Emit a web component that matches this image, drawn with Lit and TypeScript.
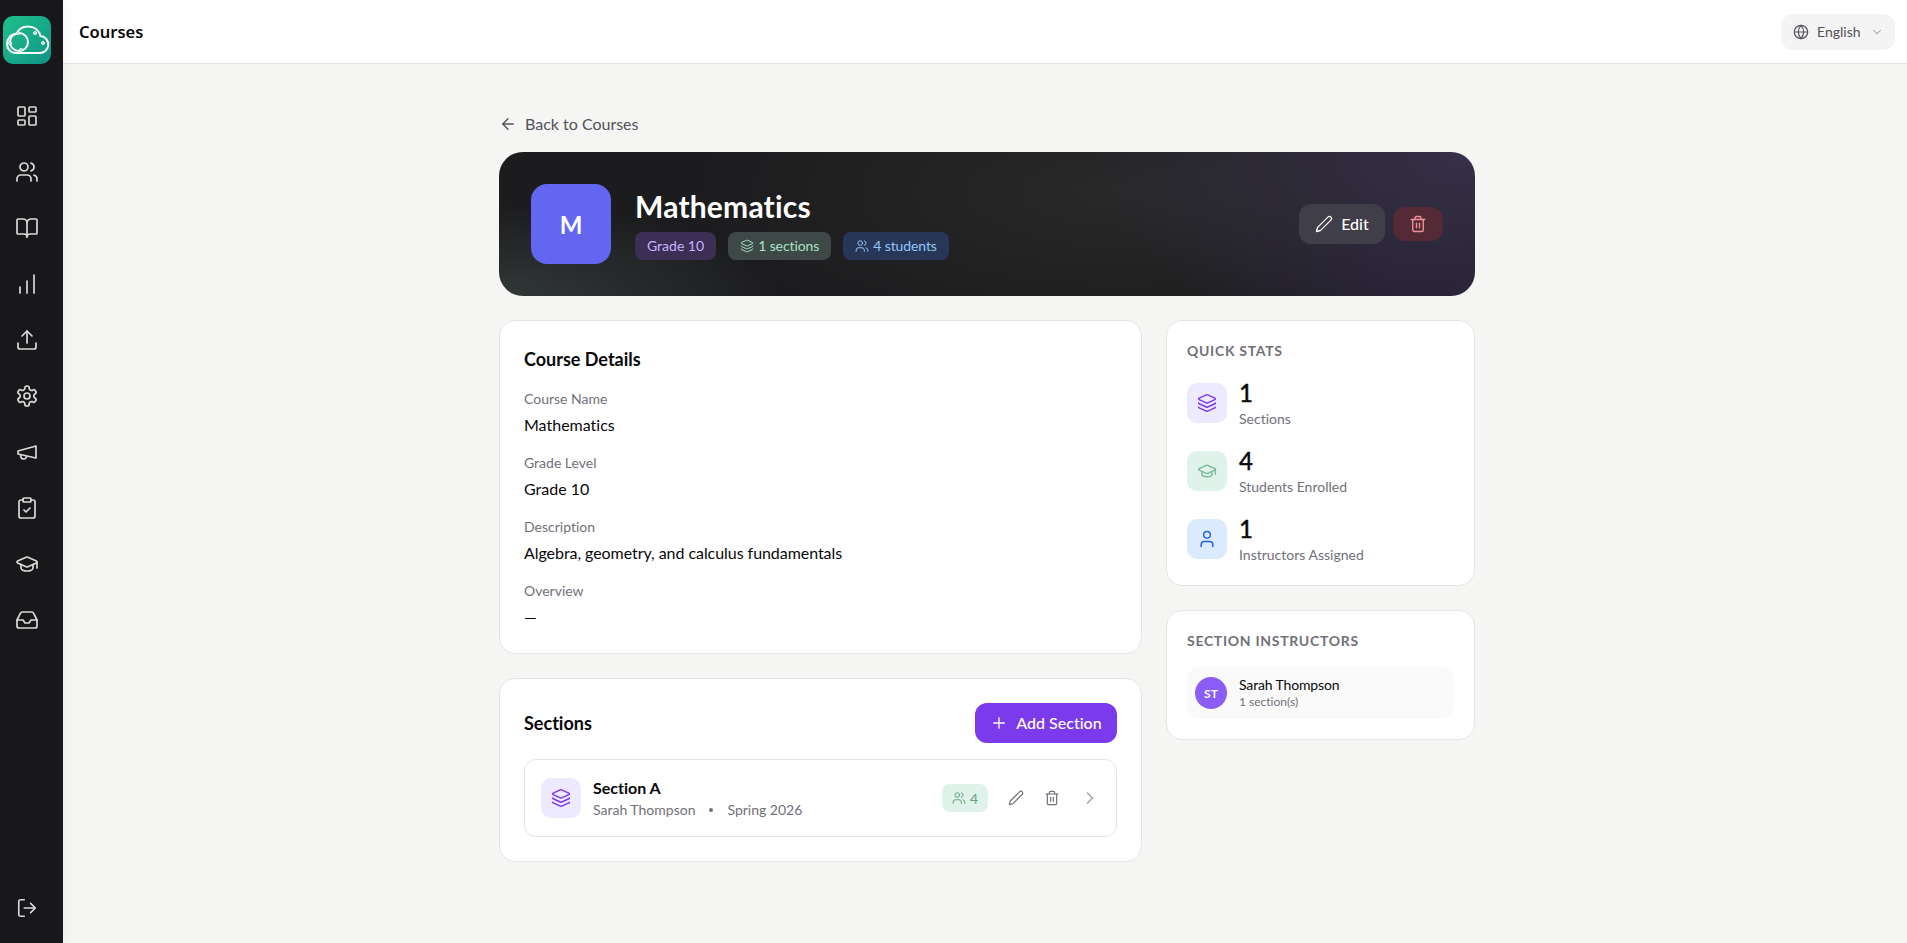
import { LitElement, html, css, svg } from "lit";
import { customElement } from "lit/decorators.js";

const I = (body: unknown, size = 24, sw = 2, cls = "") => html`<svg class=${cls} width=${size} height=${size} viewBox="0 0 24 24" fill="none" stroke="currentColor" stroke-width=${sw} stroke-linecap="round" stroke-linejoin="round">${body}</svg>`;

const dash = svg`<rect x="3" y="3" width="7" height="9" rx="1"/><rect x="14" y="3" width="7" height="5" rx="1"/><rect x="14" y="12" width="7" height="9" rx="1"/><rect x="3" y="16" width="7" height="5" rx="1"/>`;
const users = svg`<path d="M16 21v-2a4 4 0 0 0-4-4H6a4 4 0 0 0-4 4v2"/><circle cx="9" cy="7" r="4"/><path d="M22 21v-2a4 4 0 0 0-3-3.870"/><path d="M16 3.130a4 4 0 0 1 0 7.750"/>`;
const book = svg`<path d="M12 7v14"/><path d="M3 18a1 1 0 0 1-1-1V4a1 1 0 0 1 1-1h5a4 4 0 0 1 4 4 4 4 0 0 1 4-4h5a1 1 0 0 1 1 1v13a1 1 0 0 1-1 1h-6a3 3 0 0 0-3 3 3 3 0 0 0-3-3z"/>`;
const chart = svg`<path d="M5 21v-6"/><path d="M12 21V9"/><path d="M19 21V3"/>`;
const upload = svg`<path d="M21 15v4a2 2 0 0 1-2 2H5a2 2 0 0 1-2-2v-4"/><path d="M17 8l-5-5-5 5"/><path d="M12 3v12"/>`;
const gear = svg`<path d="M12.220 2h-.44a2 2 0 0 0-2 2v.18a2 2 0 0 1-1 1.730l-.43.25a2 2 0 0 1-2 0l-.15-.08a2 2 0 0 0-2.730.73l-.22.38a2 2 0 0 0 .73 2.730l.15.1a2 2 0 0 1 1 1.720v.51a2 2 0 0 1-1 1.740l-.15.09a2 2 0 0 0-.73 2.730l.22.38a2 2 0 0 0 2.730.73l.15-.08a2 2 0 0 1 2 0l.43.25a2 2 0 0 1 1 1.730V20a2 2 0 0 0 2 2h.44a2 2 0 0 0 2-2v-.18a2 2 0 0 1 1-1.730l.43-.25a2 2 0 0 1 2 0l.15.08a2 2 0 0 0 2.730-.73l.22-.39a2 2 0 0 0-.73-2.730l-.15-.08a2 2 0 0 1-1-1.740v-.5a2 2 0 0 1 1-1.740l.15-.09a2 2 0 0 0 .73-2.730l-.22-.38a2 2 0 0 0-2.730-.73l-.15.08a2 2 0 0 1-2 0l-.43-.25a2 2 0 0 1-1-1.730V4a2 2 0 0 0-2-2z"/><circle cx="12" cy="12" r="3"/>`;
const mega = svg`<path d="M3 11l18-5v12L3 14z"/><path d="M11.600 16.800a3 3 0 1 1-5.800-1.600"/>`;
const clip = svg`<rect x="8" y="2" width="8" height="4" rx="1"/><path d="M16 4h2a2 2 0 0 1 2 2v14a2 2 0 0 1-2 2H6a2 2 0 0 1-2-2V6a2 2 0 0 1 2-2h2"/><path d="M9 14l2 2 4-4"/>`;
const grad = svg`<path d="M21.420 10.920a1 1 0 0 0-.02-1.840L12.830 5.180a2 2 0 0 0-1.660 0L2.600 9.080a1 1 0 0 0 0 1.830l8.570 3.910a2 2 0 0 0 1.660 0z"/><path d="M22 10v6"/><path d="M6 12.500V16a6 3 0 0 0 12 0v-3.500"/>`;
const inbox = svg`<path d="M22 12h-6l-2 3h-4l-2-3H2"/><path d="M5.450 5.110L2 12v6a2 2 0 0 0 2 2h16a2 2 0 0 0 2-2v-6l-3.450-6.890A2 2 0 0 0 16.760 4H7.240a2 2 0 0 0-1.790 1.110z"/>`;
const logout = svg`<path d="M9 21H5a2 2 0 0 1-2-2V5a2 2 0 0 1 2-2h4"/><path d="M16 17l5-5-5-5"/><path d="M21 12H9"/>`;
const arrowLeft = svg`<path d="M12 19l-7-7 7-7"/><path d="M19 12H5"/>`;
const layers = svg`<path d="M12.830 2.180a2 2 0 0 0-1.660 0L2.600 6.080a1 1 0 0 0 0 1.830l8.580 3.910a2 2 0 0 0 1.660 0l8.580-3.900a1 1 0 0 0 0-1.830z"/><path d="M2 12a1 1 0 0 0 .58.91l8.600 3.910a2 2 0 0 0 1.650 0l8.580-3.900A1 1 0 0 0 22 12"/><path d="M2 17a1 1 0 0 0 .58.91l8.600 3.910a2 2 0 0 0 1.650 0l8.580-3.900A1 1 0 0 0 22 17"/>`;
const pencil = svg`<path d="M21.170 6.810a1 1 0 0 0-3.990-3.990L3.840 16.170a2 2 0 0 0-.5.83l-1.320 4.350a.5.5 0 0 0 .62.62l4.350-1.320a2 2 0 0 0 .83-.5z"/>`;
const trash = svg`<path d="M3 6h18"/><path d="M19 6v14a2 2 0 0 1-2 2H7a2 2 0 0 1-2-2V6"/><path d="M8 6V4a2 2 0 0 1 2-2h4a2 2 0 0 1 2 2v2"/><path d="M10 11v6"/><path d="M14 11v6"/>`;
const user = svg`<path d="M19 21v-2a4 4 0 0 0-4-4H9a4 4 0 0 0-4 4v2"/><circle cx="12" cy="7" r="4"/>`;
const plus = svg`<path d="M5 12h14"/><path d="M12 5v14"/>`;
const chevR = svg`<path d="M9 18l6-6-6-6"/>`;
const chevD = svg`<path d="M6 9l6 6 6-6"/>`;
const globe = svg`<circle cx="12" cy="12" r="10"/><path d="M12 2a14.500 14.500 0 0 0 0 20 14.500 14.500 0 0 0 0-20"/><path d="M2 12h20"/>`;

@customElement("app-root")
export class AppRoot extends LitElement {
  static styles = css`
    :host { display: block; font-family: "Lato", "Liberation Sans", sans-serif; color: #09090b; font-variant-ligatures: none; }
    * { box-sizing: border-box; }
    svg { display: block; flex: none; }
    .app { display: flex; height: 943px; background: #f5f5f3; overflow: hidden; }
    .side { width: 63px; flex: none; background: #18181b; display: flex; flex-direction: column; align-items: center; padding: 16px 9px 0 0; color: #d9d9da; position: relative; z-index: 1; box-shadow: 2px 0 12px rgba(0,0,0,.04); }
    .logo { width: 48px; height: 48px; border-radius: 10px; background: linear-gradient(135deg, #1fc08a, #0f9488); margin-bottom: 40px; }
    .nav { display: flex; flex-direction: column; gap: 32px; align-items: center; }
    .out { margin-top: auto; margin-bottom: 24px; }
    .main { flex: 1; min-width: 0; display: flex; flex-direction: column; }
    .top { height: 64px; flex: none; background: #fff; border-bottom: 1px solid #e5e5e5; display: flex; align-items: center; justify-content: space-between; padding: 0 12px 0 16px; }
    .top h1 { margin: 0; font: 600 16.500px "Noto Sans", sans-serif; color: #09090b; }
    .lang { height: 36px; width: 114px; border-radius: 12px; background: #f4f4f5; color: #52525b; display: flex; align-items: center; padding: 0 0 0 12px; font-size: 14px; }
    .lang span { margin-left: 8px; }
    .lang .chev { margin-left: 9px; color: #a1a1aa; }
    .body { padding-left: 4px; }
    .content { width: 976px; margin: 0 auto; padding-top: 48px; }
    .back { display: flex; align-items: center; gap: 8px; height: 24px; color: #52525b; font-size: 16px; margin-bottom: 16px; padding-bottom: 2px; }
    .back svg { margin-top: 2px; }
    .hero { height: 144px; border-radius: 24px; padding: 32px; display: flex; align-items: flex-start; justify-content: space-between;
      background:
        radial-gradient(ellipse 280px 90px at 0% 100%, rgba(70,82,80,.5), transparent),
        radial-gradient(ellipse 380px 210px at 100% 0%, rgba(58,50,78,.9), transparent),
        radial-gradient(ellipse 280px 120px at 100% 100%, rgba(40,32,60,.7), transparent),
        radial-gradient(ellipse 420px 150px at 620px 40px, rgba(44,44,45,.8), transparent),
        #1c1c1e; }
    .hl { display: flex; gap: 24px; }
    .av { width: 80px; height: 80px; border-radius: 16px; background: #6366f1; color: #fff; font-weight: 700; font-size: 24px; display: flex; align-items: center; justify-content: center; }
    .ht h2 { margin: 0 0 8px; color: #fff; font-size: 30px; line-height: 36px; font-weight: 700; padding-top: 4px; letter-spacing: .2px; }
    .chips { display: flex; gap: 12px; }
    .chip { height: 28px; padding: 0 12px 2px; border-radius: 8px; display: flex; align-items: center; gap: 4px; font-size: 14px; }
    .chip svg { margin-top: 2px; }
    .c1 { background: #3d2e55; color: #c4b5fd; }
    .c2 { background: #3e4847; color: #a7e3c4; letter-spacing: -.1px; }
    .c3 { background: #283757; color: #93c5fd; letter-spacing: -.1px; }
    .acts { display: flex; align-items: center; gap: 8px; padding-top: 20px; }
    .edit { width: 86px; height: 40px; border-radius: 12px; background: #3f3e49; color: #fff; display: flex; align-items: center; justify-content: center; gap: 8px; font-size: 16px; font-weight: 500; padding-bottom: 2px; }
    .edit svg { margin-top: 2px; }
    .del { width: 50px; height: 34px; border-radius: 12px; background: #532a35; color: #f3919a; display: flex; align-items: center; justify-content: center; }
    .grid { display: grid; grid-template-columns: 1fr 309px; column-gap: 24px; margin-top: 24px; align-items: start; }
    .col { display: flex; flex-direction: column; gap: 24px; }
    .card { background: #fff; border: 1px solid #e5e5e5; border-radius: 16px; }
    .det { padding: 24px; height: 334px; }
    .det h3, .sec h3 { margin: 0; font-size: 18px; line-height: 28px; font-weight: 700; color: #09090b; }
    .det h3 { margin-bottom: 16px; }
    .lab { font-size: 14px; line-height: 20px; color: #71717a; }
    .val { font-size: 16px; line-height: 24px; margin-top: 4px; margin-bottom: 16px; color: #09090b; }
    .val.long { letter-spacing: -.055px; }
    .sec { padding: 24px; }
    .sech { display: flex; align-items: center; justify-content: space-between; margin-bottom: 16px; }
    .add { width: 142px; height: 40px; border-radius: 12px; background: #7c3aed; color: #fff; display: flex; align-items: center; justify-content: center; gap: 8px; font-size: 16px; font-weight: 500; padding-bottom: 2px; }
    .add svg { margin-top: 2px; }
    .row { height: 78px; border: 1px solid #e5e5e5; border-radius: 12px; display: flex; align-items: center; padding: 0 16px; }
    .ico { width: 40px; height: 40px; border-radius: 10px; display: flex; align-items: center; justify-content: center; flex: none; }
    .vi { background: #ede9fe; color: #7c3aed; }
    .gr { background: #e0f3ea; color: #7dbb9f; }
    .bl { background: #dbeafe; color: #2563eb; }
    .rt { margin-left: 12px; flex: 1; padding-top: 1px; }
    .rn { font-size: 16px; font-weight: 700; line-height: 20px; }
    .rs { font-size: 14px; line-height: 20px; color: #71717a; display: flex; align-items: center; margin-top: 2px; }
    .dot { width: 4px; height: 4px; border-radius: 50%; background: #71717a; margin: 0 14px; }
    .cnt { height: 28px; width: 46px; border-radius: 8px; background: #e0f3ea; color: #5f9f83; display: flex; align-items: center; justify-content: center; gap: 4px; font-size: 14px; }
    .rb { color: #71717a; margin-left: 20px; }
    .rc { color: #a1a1aa; margin-left: 20px; }
    .sc { padding: 20px; }
    .st { font-size: 14px; line-height: 20px; font-weight: 700; color: #71717a; letter-spacing: .7px; }
    .stats { margin-top: 16px; display: flex; flex-direction: column; gap: 16px; }
    .stat { display: flex; align-items: center; gap: 12px; height: 52px; }
    .sn { font-size: 24px; line-height: 32px; font-weight: 500; -webkit-text-stroke: .35px #09090b; color: #09090b; margin-top: -1px; }
    .sl { font-size: 14px; line-height: 20px; color: #71717a; }
    .inst { margin-top: 16px; background: #fafafa; border-radius: 12px; height: 52px; display: flex; align-items: center; padding: 0 8px; gap: 12px; }
    .ia { width: 32px; height: 32px; border-radius: 50%; background: #8b5cf6; color: #fff; font-size: 12px; font-weight: 700; display: flex; align-items: center; justify-content: center; }
    .in { font-size: 14px; line-height: 18px; color: #09090b; letter-spacing: -.15px; }
    .is { font-size: 12px; line-height: 16px; color: #71717a; }
  `;

  render() {
    return html`<div class="app">
      <aside class="side">
        <div class="logo">
          <svg width="48" height="48" viewBox="0 0 48 48" fill="none" stroke="#fff" stroke-width="2">
            <path d="M12 37H36a8.500 8.500 0 0 0 1.500-17C36 14 31 10.500 25 10.500C20 10.500 15.500 13 13.500 18C8 18 4 22.500 4 28C4 33 8 37 12 37z"/>
            <circle cx="16" cy="26" r="9"/>
            <g fill="#8fd9c3" stroke-width="1">
              <circle cx="15" cy="17" r="1.500"/><circle cx="32" cy="17" r="1.500"/><circle cx="40" cy="27" r="1.500"/><circle cx="18" cy="34" r="1.500"/><circle cx="7" cy="27" r="1.500"/>
            </g>
          </svg>
        </div>
        <nav class="nav">
          ${[dash, users, book, chart, upload, gear, mega, clip, grad, inbox].map(i => I(i, 24, 1.7))}
        </nav>
        <div class="out">${I(logout, 22, 1.8)}</div>
      </aside>
      <div class="main">
        <header class="top">
          <h1>Courses</h1>
          <div class="lang">${I(globe, 16, 1.8)}<span>English</span>${I(chevD, 14, 1.8, "chev")}</div>
        </header>
        <div class="body"><div class="content">
          <div class="back">${I(arrowLeft, 18, 1.8)}Back to Courses</div>
          <section class="hero">
            <div class="hl">
              <div class="av">M</div>
              <div class="ht">
                <h2>Mathematics</h2>
                <div class="chips">
                  <div class="chip c1">Grade 10</div>
                  <div class="chip c2">${I(layers, 14, 1.7)}1 sections</div>
                  <div class="chip c3">${I(users, 14, 1.7)}4 students</div>
                </div>
              </div>
            </div>
            <div class="acts">
              <div class="edit">${I(pencil, 18, 1.8)}Edit</div>
              <div class="del">${I(trash, 18, 1.8)}</div>
            </div>
          </section>
          <div class="grid">
            <div class="col">
              <section class="card det">
                <h3>Course Details</h3>
                <div class="lab">Course Name</div><div class="val">Mathematics</div>
                <div class="lab">Grade Level</div><div class="val">Grade 10</div>
                <div class="lab">Description</div><div class="val long">Algebra, geometry, and calculus fundamentals</div>
                <div class="lab">Overview</div><div class="val">—</div>
              </section>
              <section class="card sec">
                <div class="sech">
                  <h3>Sections</h3>
                  <div class="add">${I(plus, 18, 1.8)}Add Section</div>
                </div>
                <div class="row">
                  <div class="ico vi">${I(layers, 20, 1.8)}</div>
                  <div class="rt">
                    <div class="rn">Section A</div>
                    <div class="rs">Sarah Thompson<span class="dot"></span>Spring 2026</div>
                  </div>
                  <div class="cnt">${I(users, 14, 1.7)}4</div>
                  <div class="rb">${I(pencil, 16, 1.8)}</div>
                  <div class="rb">${I(trash, 16, 1.8)}</div>
                  <div class="rc">${I(chevR, 20, 1.8)}</div>
                </div>
              </section>
            </div>
            <div class="col">
              <section class="card sc">
                <div class="st">QUICK STATS</div>
                <div class="stats">
                  <div class="stat"><div class="ico vi">${I(layers, 20, 1.8)}</div><div><div class="sn">1</div><div class="sl">Sections</div></div></div>
                  <div class="stat"><div class="ico gr">${I(grad, 20, 1.8)}</div><div><div class="sn">4</div><div class="sl">Students Enrolled</div></div></div>
                  <div class="stat"><div class="ico bl">${I(user, 20, 1.8)}</div><div><div class="sn">1</div><div class="sl">Instructors Assigned</div></div></div>
                </div>
              </section>
              <section class="card sc">
                <div class="st">SECTION INSTRUCTORS</div>
                <div class="inst"><div class="ia">ST</div><div><div class="in">Sarah Thompson</div><div class="is">1 section(s)</div></div></div>
              </section>
            </div>
          </div>
        </div></div>
      </div>
    </div>`;
  }
}
